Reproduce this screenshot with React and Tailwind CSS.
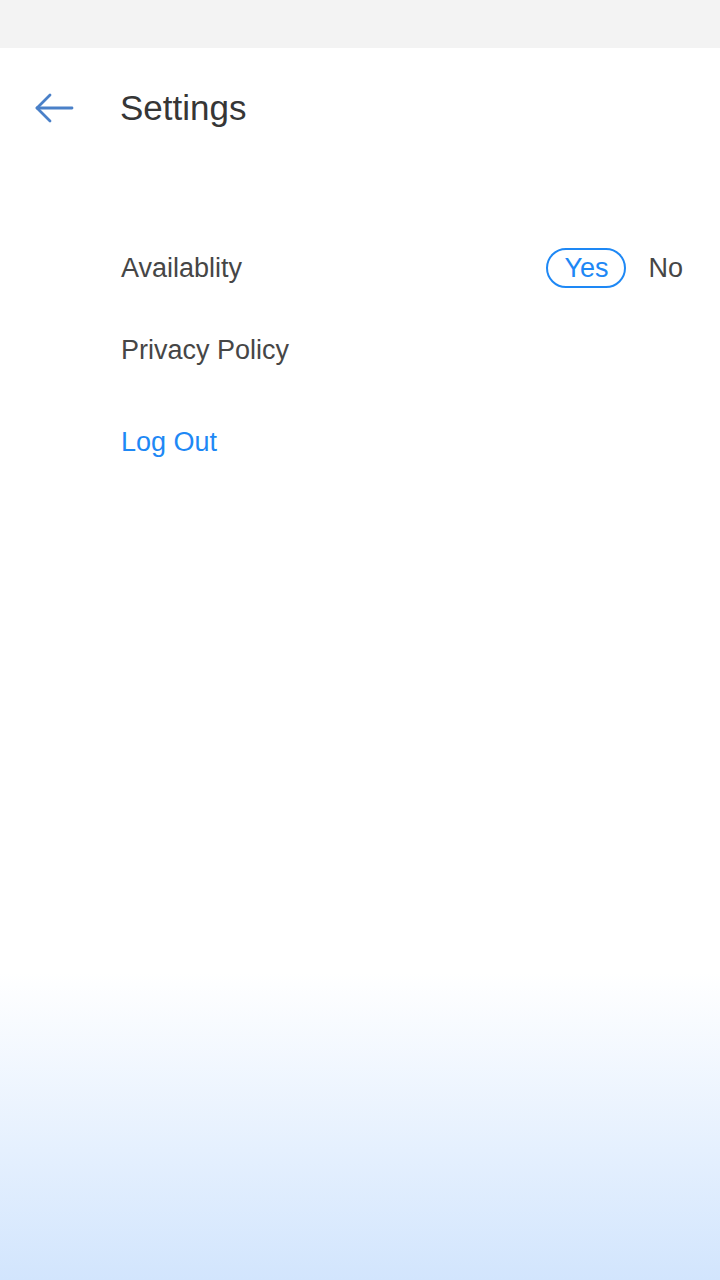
import React, { useState } from 'react';

const BackArrow = () => (
    <svg width="40" height="30" viewBox="0 0 40 30" fill="none" stroke="#4a80c8" strokeWidth="2.8" strokeLinecap="round" strokeLinejoin="round">
        <path d="M38 15H3" />
        <path d="M16 2L3 15l13 13" />
    </svg>
);

const SettingsScreen = () => {
    const [available, setAvailable] = useState(true);

    return (
        <div
            className="flex flex-col h-screen w-full bg-gradient-to-b from-white from-[76%] to-[#d2e5fd] text-[#464646]"
            style={{ fontFamily: '"Liberation Sans", Arial, sans-serif' }}
        >
            {/* status bar */}
            <div className="h-12 bg-[#f3f3f3] flex-shrink-0" />

            {/* header */}
            <div className="h-[120px] flex items-center flex-shrink-0">
                <button type="button" className="w-[120px] pl-[34px] flex items-center">
                    <BackArrow />
                </button>
                <h1 className="text-[35px] text-[#363636]">Settings</h1>
            </div>

            {/* options */}
            <div className="pl-[121px] pr-[37px] mt-[60px] flex flex-col">
                <div className="h-20 flex items-center justify-between">
                    <span className="text-[27px]">Availablity</span>
                    <div className="flex items-center gap-[22px]">
                        <button
                            type="button"
                            onClick={() => setAvailable(true)}
                            className={available
                                ? "w-20 h-10 rounded-full border-2 border-[#1e88f5] text-[#1e88f5] text-[27px] flex items-center justify-center"
                                : "w-20 h-10 rounded-full border-2 border-transparent text-[#464646] text-[27px] flex items-center justify-center"}
                        >
                            Yes
                        </button>
                        <button
                            type="button"
                            onClick={() => setAvailable(false)}
                            className={available ? "text-[27px] text-[#464646]" : "text-[27px] text-[#1e88f5]"}
                        >
                            No
                        </button>
                    </div>
                </div>

                <div className="h-[84px] flex items-center">
                    <span className="text-[27px]">Privacy Policy</span>
                </div>

                <div className="h-20 mt-[10px] flex items-center">
                    <button type="button" className="text-[27px] text-[#1e88f5]">Log Out</button>
                </div>
            </div>
        </div>
    );
};

export default function App() {
    return <SettingsScreen />;
}
